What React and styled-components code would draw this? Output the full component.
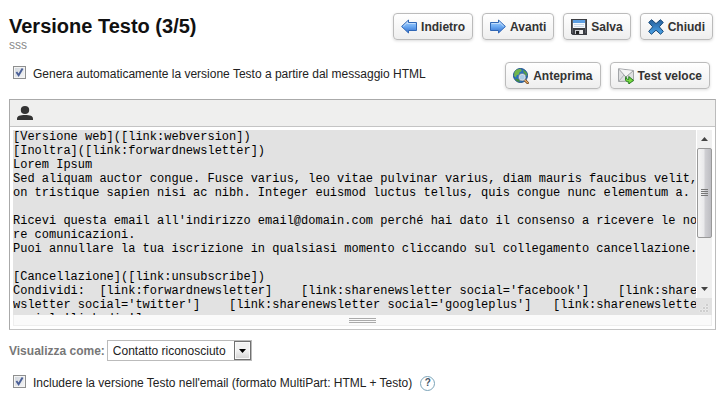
import React from "react";
import styled, { createGlobalStyle } from "styled-components";

const GlobalStyle = createGlobalStyle`
  *, *::before, *::after { box-sizing: border-box; }
  body {
    margin: 0;
    background: #fff;
    color: #222;
    font: 12px/16px "Liberation Sans", Arial, sans-serif;
  }
`;

const Page = styled.main`
  padding: 13px 8px 0 9px;
`;

const TopRow = styled.header`
  display: flex;
  justify-content: space-between;
  align-items: flex-start;
  padding-right: 3px;
`;

const Title = styled.h1`
  margin: 0;
  font-size: 20px;
  line-height: 26px;
  font-weight: bold;
  color: #111;
`;

const Subtitle = styled.p`
  margin: 0;
  line-height: 12px;
  color: #888;
`;

const OptionsRow = styled.div`
  display: flex;
  justify-content: space-between;
  align-items: flex-start;
  margin-top: 11px;
  padding-right: 6px;
`;

const ButtonGroup = styled.div`
  display: flex;
  gap: 9px;
`;

const Button = styled.button`
  display: flex;
  align-items: center;
  gap: 4px;
  height: 27px;
  margin: 0;
  padding: 0 7px;
  border: 1px solid #bbb;
  border-radius: 4px;
  background: linear-gradient(#fff, #eee);
  box-shadow: 0 1px 3px rgba(0, 0, 0, 0.14);
  color: #333;
  font: bold 12px/16px "Liberation Sans", Arial, sans-serif;
  white-space: nowrap;
  cursor: pointer;

  svg { flex: none; }
`;

const CheckLabel = styled.label`
  display: flex;
  align-items: center;
  gap: 7px;
  padding-left: 4px;
  line-height: 16px;
  white-space: nowrap;
`;

const OptionsCheckLabel = styled(CheckLabel)`
  margin-top: 4px;
`;

const Checkbox = styled.input`
  appearance: none;
  flex: none;
  width: 13px;
  height: 13px;
  margin: 0 0 3px;
  border: 1px solid #8e8f8f;
  background: linear-gradient(135deg, #cfd5dc, #f6f6f6);
  box-shadow: inset 0 0 0 1px #f4f4f4;

  &:checked {
    background:
      url("data:image/svg+xml,%3Csvg xmlns='http://www.w3.org/2000/svg' viewBox='0 0 11 11'%3E%3Cpath d='M2.4 5 4.6 8.2 8.6 1.4' fill='none' stroke='%234a5f97' stroke-width='1.9'/%3E%3C/svg%3E") center / 11px 11px no-repeat,
      linear-gradient(135deg, #cfd5dc, #f6f6f6);
  }
`;

const Editor = styled.section`
  margin-top: 10px;
  border: 1px solid #aaa;
  border-color: #aaa #bbb #c4c4c4 #aaa;
`;

const EditorToolbar = styled.div`
  display: flex;
  align-items: center;
  height: 27px;
  padding-left: 4px;
  border-bottom: 1px solid #c4c4c4;
  background: #efefee;
`;

const ToolButton = styled.button`
  display: flex;
  padding: 0 3px;
  border: 0;
  background: none;
  cursor: pointer;
`;

const EditorBody = styled.div`
  padding: 3px;
`;

const TextFrame = styled.div`
  display: grid;
  grid-template-columns: 1fr 16px;
  height: 185px;
  background: #e2e2e2;
`;

const TextBox = styled.textarea`
  display: block;
  width: 100%;
  height: 100%;
  margin: 0;
  padding: 0;
  border: 0;
  outline: 0;
  resize: none;
  overflow: hidden;
  background: transparent;
  color: #000;
  font: 12px/14px "Liberation Mono", "Courier New", monospace;
  text-rendering: optimizeSpeed;
  white-space: pre;
`;

const ScrollColumn = styled.div`
  display: flex;
  flex-direction: column;
  justify-content: space-between;
`;

const ScrollTrack = styled.div`
  display: flex;
  flex-direction: column;
  height: 168px;
  border: solid #fff;
  border-width: 0 0 0 1px;
  background: #f0f0f0;
`;

const ScrollArrow = styled.div`
  display: flex;
  align-items: center;
  justify-content: center;
  height: 18px;
  flex: none;
`;

const ScrollThumb = styled.div`
  display: flex;
  flex-direction: column;
  align-items: center;
  justify-content: center;
  height: 90px;
  margin-bottom: auto;
  border: 1px solid #999;
  border-radius: 2px;
  background: linear-gradient(90deg, #f5f5f5, #e9e9eb 45%, #cfcfd3 55%, #bdbdc2);
`;

const Grip = styled.svg`
  display: block;
`;

const ResizeBar = styled.div`
  display: flex;
  align-items: center;
  justify-content: center;
  height: 11px;
  border: 1px solid #eee;
  border-top: 0;
  background: #fafafa;
`;

const ViewRow = styled.div`
  display: flex;
  align-items: center;
  gap: 2px;
  margin-top: 10px;
`;

const ViewLabel = styled.label`
  font-weight: bold;
  color: #777;
`;

const SelectWrap = styled.div`
  position: relative;
`;

const Select = styled.select`
  appearance: none;
  display: block;
  height: 21px;
  width: 145px;
  margin: 0;
  padding: 0 18px 0 5px;
  border: 1px solid #bbb;
  border-radius: 0;
  background: #fff;
  color: #222;
  font: 12px/16px "Liberation Sans", Arial, sans-serif;
`;

const SelectArrow = styled.span`
  position: absolute;
  top: 1px;
  right: 1px;
  bottom: 1px;
  display: flex;
  align-items: center;
  justify-content: center;
  width: 17px;
  border: 1px solid #707070;
  background: linear-gradient(#f2f2f2 50%, #d4d4d4);
  box-shadow: inset 0 0 0 1px #fafafa;
  pointer-events: none;
`;

const IncludeRow = styled.div`
  display: flex;
  align-items: center;
  gap: 8px;
  margin-top: 14px;
`;

const HelpButton = styled.button`
  display: flex;
  align-items: center;
  justify-content: center;
  width: 15px;
  height: 15px;
  padding: 0;
  border: 1px solid #7ba3b8;
  border-radius: 50%;
  background: #fff;
  color: #456;
  font: bold 10px/12px "Liberation Sans", Arial, sans-serif;
  cursor: pointer;
`;

const ArrowIcon = ({ id, direction }) => (
  <svg width="16" height="16" viewBox="0 0 16 16" aria-hidden="true">
    <defs>
      <linearGradient id={id} x1="0" y1="0" x2="0" y2="1">
        <stop offset="0" stopColor="#b4d8ff" />
        <stop offset="0.5" stopColor="#6caaf2" />
        <stop offset="1" stopColor="#2f6bcc" />
      </linearGradient>
    </defs>
    <path
      d={direction === "left"
        ? "M7.5 1V3.5H15.5V11.5H7.5V14L.6 7.5Z"
        : "M8.5 1V3.5H.5V11.5H8.5V14L15.4 7.5Z"}
      fill={`url(#${id})`}
      stroke="#2f66b5"
      strokeLinejoin="round"
    />
    <path
      d={direction === "left" ? "M2.2 7.4 6.5 3.2V4.5H14.5" : "M1.5 4.5H9.5V3.2L13.8 7.4"}
      fill="none"
      stroke="#d7eaff"
      strokeOpacity="0.7"
    />
  </svg>
);

const SaveIcon = () => (
  <svg width="16" height="16" viewBox="0 0 16 16" aria-hidden="true">
    <path d="M0 0H16V16H1.5L0 14.5Z" fill="#3b3d42" />
    <path d="M1 1H2V14H1ZM14 1H15V14H14Z" fill="#5a5d65" />
    <path d="M2 1H14V9H2Z" fill="#f4f8fd" />
    <path d="M2 1H14V4H2Z" fill="#5c9ee2" />
    <path d="M3 5.5H13M3 7.5H13" stroke="#c9d8e8" />
    <path d="M4 11H12V15H4Z" fill="#c9cbcf" />
    <path d="M5 12H8V15H5Z" fill="#222" />
    <path d="M9 11H12V15H9Z" fill="#eee" />
  </svg>
);

const CloseIcon = () => (
  <svg width="16" height="16" viewBox="0 0 16 16" aria-hidden="true">
    <defs>
      <linearGradient id="close-fill" x1="0" y1="0" x2="0" y2="1">
        <stop offset="0" stopColor="#255f9b" />
        <stop offset="1" stopColor="#4aa3e8" />
      </linearGradient>
    </defs>
    <path
      d="M3.6.7 8 4.6 12.4.7 15.3 3.4 11.3 7.8 15.3 12.4 12.6 15.3 8 11.2 3.4 15.3.7 12.4 4.7 7.8.7 3.4Z"
      fill="url(#close-fill)"
      stroke="#174878"
      strokeLinejoin="round"
    />
  </svg>
);

const PreviewIcon = () => (
  <svg width="16" height="16" viewBox="0 0 16 16" aria-hidden="true">
    <circle cx="7.5" cy="7.5" r="7" fill="#2a70bd" stroke="#1d4f86" />
    <path d="M1.5 4C3 1.2 6 .8 8 1.2L8.8 3 6.5 4.3 6 6.5 3.6 7.2 3 9.5 1 8Z" fill="#72b64b" />
    <path d="M10 1.8C13 3 14.4 5.5 14.2 8L12.5 7 10.5 4.2Z" fill="#57a044" />
    <path d="M3 10.5 6 11.5 7 14C5 14 3 12.8 2.2 11.5Z" fill="#468e3c" />
    <path d="M11.3 11.5 14.6 14.8" stroke="#74451b" strokeWidth="2.6" strokeLinecap="round" />
    <path d="M11.6 11.8 14.5 14.7" stroke="#eeb26a" strokeWidth="1.2" strokeLinecap="round" />
    <circle cx="9.2" cy="9.2" r="3.1" fill="#aacbe4" stroke="#e4e8ec" strokeWidth="1.2" />
    <circle cx="9.2" cy="9.2" r="3.7" fill="none" stroke="#496271" strokeWidth="0.5" />
  </svg>
);

const SendIcon = () => (
  <svg width="16" height="16" viewBox="0 0 16 16" aria-hidden="true">
    <path d="M.5.7 15.5 2.5V13L.5 13.5Z" fill="#dfe0e1" stroke="#a2a5a8" />
    <path d="M1 13 6.2 6.8M15 12.5 9.5 7" stroke="#b0b3b6" fill="none" />
    <path d="M1 1.2 7.8 9 15 3" fill="#f4f4f4" stroke="#a0a3a6" />
    <path
      d="M8 8.6C8 11 9.4 11.6 10.8 11.4V8.6L15.5 12.4 10.8 16V13.9C8 14 6.6 12.2 8 8.6Z"
      fill="#7ada43"
      stroke="#267d22"
      strokeLinejoin="round"
    />
  </svg>
);

const ContactIcon = () => (
  <svg width="16" height="15" viewBox="0 0 16 15" aria-hidden="true">
    <ellipse cx="8" cy="4" rx="4.2" ry="4" fill="#333" />
    <path d="M0 14V12.5C0 10 3 9 8 9S16 10 16 12.5V14Z" fill="#333" />
  </svg>
);

const TEXT_LINES = [
  "[Versione web]([link:webversion])",
  "[Inoltra]([link:forwardnewsletter])",
  "Lorem Ipsum",
  "Sed aliquam auctor congue. Fusce varius, leo vitae pulvinar varius, diam mauris faucibus velit, n",
  "on tristique sapien nisi ac nibh. Integer euismod luctus tellus, quis congue nunc elementum a.",
  "",
  "Ricevi questa email all'indirizzo email@domain.com perché hai dato il consenso a ricevere le nost",
  "re comunicazioni.",
  "Puoi annullare la tua iscrizione in qualsiasi momento cliccando sul collegamento cancellazione.",
  "",
  "[Cancellazione]([link:unsubscribe])",
  "Condividi:  [link:forwardnewsletter]    [link:sharenewsletter social='facebook']    [link:sharene",
  "wsletter social='twitter']    [link:sharenewsletter social='googleplus']   [link:sharenewsletter",
  "social='linkedin']",
];

export default function App() {
  return (
    <>
      <GlobalStyle />
      <Page>
        <TopRow>
          <div>
            <Title>Versione Testo (3/5)</Title>
            <Subtitle>sss</Subtitle>
          </div>
          <ButtonGroup>
            <Button type="button"><ArrowIcon id="arrow-back" direction="left" />Indietro</Button>
            <Button type="button"><ArrowIcon id="arrow-next" direction="right" />Avanti</Button>
            <Button type="button"><SaveIcon />Salva</Button>
            <Button type="button"><CloseIcon />Chiudi</Button>
          </ButtonGroup>
        </TopRow>

        <OptionsRow>
          <OptionsCheckLabel>
            <Checkbox type="checkbox" defaultChecked />
            Genera automaticamente la versione Testo a partire dal messaggio HTML
          </OptionsCheckLabel>
          <ButtonGroup>
            <Button type="button"><PreviewIcon />Anteprima</Button>
            <Button type="button"><SendIcon />Test veloce</Button>
          </ButtonGroup>
        </OptionsRow>

        <Editor>
          <EditorToolbar>
            <ToolButton type="button" aria-label="Contatto"><ContactIcon /></ToolButton>
          </EditorToolbar>
          <EditorBody>
            <TextFrame>
              <TextBox aria-label="Versione Testo" spellCheck={false} defaultValue={TEXT_LINES.join("\n")} />
              <ScrollColumn aria-hidden="true">
                <ScrollTrack>
                  <ScrollArrow>
                    <svg width="7" height="4" viewBox="0 0 7 4"><path d="M0 4 3.5 0 7 4Z" fill="#444" /></svg>
                  </ScrollArrow>
                  <ScrollThumb>
                    <Grip width="7" height="8" viewBox="0 0 7 8">
                      <path d="M0 .5H7M0 2.5H7M0 4.5H7M0 6.5H7" stroke="#777" />
                    </Grip>
                  </ScrollThumb>
                  <ScrollArrow>
                    <svg width="7" height="4" viewBox="0 0 7 4"><path d="M0 0 3.5 4 7 0Z" fill="#444" /></svg>
                  </ScrollArrow>
                </ScrollTrack>
                <Grip width="14" height="11" viewBox="0 0 14 11">
                  <path
                    d="M10 0h2v2h-2zM7 3h2v2H7zM10 3h2v2h-2zM4 6h2v2H4zM7 6h2v2H7zM10 6h2v2h-2z"
                    fill="#b0b0b0"
                    stroke="#f4f4f4"
                    strokeWidth="0.5"
                  />
                </Grip>
              </ScrollColumn>
            </TextFrame>
            <ResizeBar>
              <Grip width="27" height="5" viewBox="0 0 27 5" aria-hidden="true">
                <path d="M0 .5H27M0 2.5H27M0 4.5H27" stroke="#aaa" />
              </Grip>
            </ResizeBar>
          </EditorBody>
        </Editor>

        <ViewRow>
          <ViewLabel htmlFor="view-as">Visualizza come:</ViewLabel>
          <SelectWrap>
            <Select id="view-as" defaultValue="known">
              <option value="known">Contatto riconosciuto</option>
            </Select>
            <SelectArrow>
              <svg width="7" height="4" viewBox="0 0 7 4" aria-hidden="true"><path d="M0 0 3.5 4 7 0Z" fill="#000" /></svg>
            </SelectArrow>
          </SelectWrap>
        </ViewRow>

        <IncludeRow>
          <CheckLabel>
            <Checkbox type="checkbox" defaultChecked />
            Includere la versione Testo nell'email (formato MultiPart: HTML + Testo)
          </CheckLabel>
          <HelpButton type="button" aria-label="Aiuto">?</HelpButton>
        </IncludeRow>
      </Page>
    </>
  );
}
